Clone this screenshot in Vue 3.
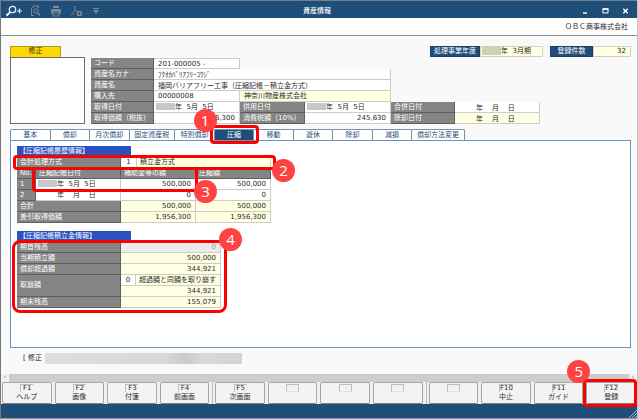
<script setup>
const yen = (n) => n.toLocaleString('en-US')

const tabs = ['基本', '償却', '月次償却', '固定資産税', '特別償却', '圧縮', '移動', '遊休', '除却', '減損', '償却方法変更']
const activeTab = '圧縮'

const history = [
  { no: 1, masked: true, date: '年  5月  5日', subsidy: 500000, reduction: 500000 },
  { no: 2, masked: false, date: '年    月    日', subsidy: 0, reduction: 0 }
]
const totals = [
  { name: '合計', subsidy: 500000, reduction: 500000 },
  { name: '差引取得価額', subsidy: 1956300, reduction: 1956300 }
]

const keyGroups = [
  [
    { key: 'F1', text: 'ヘルプ' },
    { key: 'F2', text: '画像' },
    { key: 'F3', text: '付箋' },
    { key: 'F4', text: '前画面' }
  ],
  [{ key: 'F5', text: '次画面' }, {}, {}, {}],
  [
    {},
    { key: 'F10', text: '中止' },
    { key: 'F11', text: 'ガイド' },
    { key: 'F12', text: '登録', mark: 5 }
  ]
]
</script>

<template>
  <div class="window">
    <header class="titlebar">
      <div class="tools">
        <button class="tool bright">
          <svg width="18" height="12" viewBox="0 0 18 12" fill="none" stroke="currentColor">
            <circle cx="7.500" cy="4.500" r="3.200" stroke-width="1.300" />
            <path d="M5.200 7 L1.400 10.800" stroke-width="2" />
            <path d="M12 6h5M14.500 3.500v5" stroke-width="1.200" />
          </svg>
        </button>
        <button class="tool">
          <svg width="11" height="12" viewBox="0 0 11 12" fill="none" stroke="currentColor">
            <path d="M4 10.500H1.500V3.500L3.500 1H8.500V3" />
            <circle cx="6" cy="6" r="2.200" />
            <path d="M7.500 7.500L10 10.500" stroke-width="1.500" />
          </svg>
        </button>
        <button class="tool">
          <svg width="12" height="12" viewBox="0 0 12 12" fill="currentColor">
            <path d="M3 1h6v2H3zM1 4h10v5H9.500V7h-7v2H1z" />
            <path d="M3 8h6v3H3z" fill="none" stroke="currentColor" />
          </svg>
        </button>
        <button class="tool">
          <svg width="12" height="12" viewBox="0 0 12 12" fill="none" stroke="currentColor">
            <path d="M3.500 1c1 2.500 0 6-3 9.500M4 4.500c.8 1.300 1.500 1.700 2.500 2.500" />
            <circle cx="8.500" cy="8.500" r="2" stroke-width="1.700" />
          </svg>
        </button>
        <button class="tool">
          <svg width="8" height="12" viewBox="0 0 8 12" fill="currentColor">
            <path d="M1 3h6v1H1zM1 5h6L4 9z" />
          </svg>
        </button>
      </div>
      <h1>資産情報</h1>
      <div class="controls">
        <button class="tool">
          <svg width="7" height="8" viewBox="0 0 7 8"><path d="M1 6h4" stroke="#fff" stroke-width="1.400" /></svg>
        </button>
        <button class="tool">
          <svg width="7" height="8" viewBox="0 0 7 8"><path d="M1 2h5v4H1z" fill="none" stroke="#fff" /><path d="M.5 2h6" stroke="#fff" stroke-width="1.500" /></svg>
        </button>
        <button class="tool">
          <svg width="7" height="8" viewBox="0 0 7 8"><path d="M1.300 1.800l4.400 4.400M5.700 1.800L1.300 6.200" stroke="#fff" stroke-width="1.400" /></svg>
        </button>
      </div>
    </header>

    <div class="company">ＯＢＣ商事株式会社</div>

    <main>
      <div class="topline">
        <span class="mode">修正</span>
        <dl class="summary">
          <dt class="navy year">処理事業年度</dt>
          <dd class="year-value"><i class="mask olive"></i>年&nbsp; 3月期</dd>
          <dt class="navy count">登録件数</dt>
          <dd class="count-value">32</dd>
        </dl>
      </div>

      <div class="asset">
        <div class="photo"></div>
        <div class="fields">
          <label class="name" for="code">コード</label>
          <input id="code" class="cell" value="201-000005 -">
          <label class="name first" for="kana">資産名カナ</label>
          <input id="kana" class="cell wide" value="ﾌｸｵｶﾊﾞﾘｱﾌﾘｰｺｳｼﾞ">
          <label class="name first" for="asset">資産名</label>
          <input id="asset" class="cell wide" value="福岡バリアフリー工事（圧縮記帳－積立金方式）">
          <label class="name first" for="vendor">購入先</label>
          <input id="vendor" class="cell" value="00000008">
          <output class="cell pair fixed" for="vendor">神奈川物産株式会社</output>
          <label class="name first" for="acquired">取得日付</label>
          <span class="cell date"><i class="mask"></i><input id="acquired" value="年  5月  5日"></span>
          <label class="name" for="started">供用日付</label>
          <span class="cell date"><i class="mask"></i><input id="started" value="年  5月  5日"></span>
          <label class="name" for="merged">合併日付</label>
          <input id="merged" class="cell empty-date" value="年    月    日">
          <label class="name" for="cost">取得価額（税抜）</label>
          <input id="cost" class="cell num" value="2,456,300">
          <label class="name" for="tax">消費税額（10%）</label>
          <input id="tax" class="cell num" value="245,630">
          <label class="name" for="retired">除却日付</label>
          <input id="retired" class="cell empty-date fixed" readonly value="年    月    日">
        </div>
      </div>

      <nav class="tabs">
        <div v-for="t in tabs" :key="t" class="tab" :class="{ active: t === activeTab, w5: t.length === 5, w6: t.length === 6 }">
          <button>{{ t }}</button>
          <span v-if="t === activeTab" class="frame frame-tab"><b class="pin">1</b></span>
        </div>
      </nav>

      <section class="panel">
        <h2>【圧縮記帳履歴情報】</h2>
        <div class="history">
          <div class="method">
            <label class="name" for="method">会計処理方式</label>
            <input id="method" class="cell center" value="1">
            <output class="cell fixed" for="method">積立金方式</output>
            <span class="frame frame-method"><b class="pin">2</b></span>
          </div>
          <table>
            <colgroup>
              <col class="c-no"><col class="c-date"><col class="c-amount"><col class="c-amount">
            </colgroup>
            <thead>
              <tr>
                <th>No.</th>
                <th id="h-date">圧縮記帳日付</th>
                <th id="h-subsidy">補助金等の額</th>
                <th id="h-reduction">圧縮額</th>
              </tr>
            </thead>
            <tbody>
              <tr v-for="r in history" :key="r.no">
                <th>{{ r.no }}</th>
                <td><div class="date"><i class="mask" :class="{ clear: !r.masked }"></i><input :value="r.date" aria-labelledby="h-date"></div></td>
                <td><input class="num" :value="yen(r.subsidy)" aria-labelledby="h-subsidy"></td>
                <td><input class="num" :value="yen(r.reduction)" aria-labelledby="h-reduction"></td>
              </tr>
              <tr v-for="r in totals" :key="r.name">
                <th colspan="2">{{ r.name }}</th>
                <td class="fixed num">{{ yen(r.subsidy) }}</td>
                <td class="fixed num">{{ yen(r.reduction) }}</td>
              </tr>
            </tbody>
          </table>
          <span class="frame frame-entry"><b class="pin">3</b></span>
        </div>

        <h2>【圧縮記帳積立金情報】</h2>
        <div class="reserve">
          <span class="name">期首残高</span>
          <span class="cell num off">0</span>
          <span class="name">当期積立額</span>
          <span class="cell num fixed">500,000</span>
          <span class="name">償却超過額</span>
          <span class="cell num fixed">344,921</span>
          <label class="name double" for="release">取崩額</label>
          <span class="release">
            <input id="release" class="cell center" value="0">
            <output class="cell fixed" for="release">超過額と同額を取り崩す</output>
          </span>
          <span class="cell num fixed">344,921</span>
          <span class="name">期末残高</span>
          <span class="cell num fixed">155,079</span>
          <span class="frame frame-reserve"><b class="pin">4</b></span>
        </div>
      </section>

      <div class="status">[ 修正 <i></i></div>
    </main>

    <div class="scroll"><span>‹</span><i></i><span>›</span></div>

    <div class="keys">
      <div v-for="(g, i) in keyGroups" :key="i" class="group">
        <div v-for="(k, j) in g" :key="j" class="key">
          <button :disabled="!k.key"><kbd>{{ k.key }}</kbd><span>{{ k.text }}</span></button>
          <span v-if="k.mark" class="frame frame-key"><b class="pin">{{ k.mark }}</b></span>
        </div>
      </div>
    </div>

    <footer>
      <svg width="8" height="8" viewBox="0 0 8 8"><path d="M0 8L8 0M3 8L8 3M6 8l2-2" stroke="#a9bccd" /></svg>
    </footer>
  </div>
</template>

<style>
body {
  margin: 0;
}
</style>

<style scoped>
* {
  box-sizing: border-box;
}

.window {
  display: flex;
  flex-direction: column;
  min-height: 100vh;
  overflow: hidden;
  border-left: 1px solid #77797b;
  border-right: 1px solid #c4c6c8;
  background: #f9f9f9;
  color: #2b2b2b;
  font: 7px/10px "DejaVu Sans", "Noto Sans CJK JP", sans-serif;
}

button,
input,
kbd {
  margin: 0;
  padding: 0;
  border: 0;
  background: none;
  color: inherit;
  font: inherit;
}

h1,
h2,
dl,
dd {
  margin: 0;
  font-size: 7px;
}

.titlebar {
  display: grid;
  grid-template-columns: 1fr auto 1fr;
  align-items: center;
  height: 18px;
  padding: 2px 8px 0 4px;
  border-top: 1px solid #74818d;
  background: #1f4e79;
  color: #fff;
}

.titlebar h1 {
  font-weight: 500;
}

.tools {
  display: flex;
  gap: 7px;
}

.tool {
  display: flex;
  color: #7c8892;
}

.tool.bright {
  color: #e8eef4;
}

.tools .tool:nth-child(n + 3) {
  margin-left: 2px;
}

.controls {
  display: flex;
  justify-content: flex-end;
  gap: 13px;
}

.company {
  height: 18px;
  padding: 4px 9px 0;
  border-bottom: 1px solid #8c8c8c;
  background: #fff;
  text-align: right;
}

main {
  display: flex;
  flex: 1;
  flex-direction: column;
  padding: 10px 6px 10px 9px;
}

.topline {
  display: flex;
  justify-content: space-between;
}

.mode {
  width: 51px;
  border: 1px solid #b09a1c;
  border-bottom: 0;
  background: #ffd800;
  text-align: center;
  line-height: 9px;
}

.summary {
  display: flex;
  line-height: 9px;
}

.navy {
  border: 1px solid #173e63;
  background: #1f4e79;
  color: #fff;
  text-align: center;
}

.year {
  width: 50px;
}

.count {
  width: 43px;
}

.year-value,
.count-value {
  border: 1px solid #d2d2c0;
  background: #ffffe1;
}

.year-value {
  display: flex;
  width: 63px;
  margin-right: 7px;
  padding-left: 1px;
}

.count-value {
  width: 38px;
  padding-right: 4px;
  text-align: right;
}

.mask {
  flex: none;
  width: 19px;
  height: 7px;
  margin: 1px 0 0 2px;
  background: #c8c8c8;
}

.mask.olive {
  height: 8px;
  margin: 0;
  background: #cfcfb8;
}

.mask.clear {
  background: none;
}

.asset {
  display: flex;
  gap: 6px;
  align-items: flex-end;
}

.photo {
  width: 75px;
  height: 67px;
  border: 1px solid #6c6c6c;
  background: #fff;
}

.fields {
  display: grid;
  grid-template-columns: 63px 86px 65px 86px 64px 85px;
  grid-auto-rows: 11px;
}

.name,
th {
  overflow: hidden;
  padding: 0 0 0 3px;
  border: solid;
  border-width: 0 1px 1px 0;
  border-color: #5f5f5f;
  background: #858585;
  color: #fff;
  font-weight: 400;
  line-height: 10px;
  text-align: left;
  white-space: nowrap;
}

.first {
  grid-column: 1;
}

.cell,
td {
  min-width: 0;
  border: solid #ccc;
  border-width: 0 1px 1px 0;
  background: #fff;
  line-height: 10px;
  white-space: pre;
}

.cell {
  display: block;
  width: 100%;
  height: 11px;
  padding: 0 4px;
}

.cell.wide {
  grid-column: 2 / span 3;
}

.cell.pair {
  grid-column: 3 / span 2;
}

.fields > .cell:nth-child(2) {
  border-top: 1px solid #ccc;
}

.cell.date {
  padding: 0;
}

.date {
  display: flex;
}

.date input {
  flex: 1;
  width: 100%;
  min-width: 0;
  height: 10px;
}

.cell.empty-date {
  padding-left: 21px;
}

.cell.center {
  padding: 0;
  text-align: center;
}

.cell.fixed,
.fixed {
  background: #ffffe1;
}

.cell.off {
  background: #ebebeb;
  color: #999;
}

.num {
  text-align: right;
}

.tabs {
  display: flex;
  width: 455px;
  margin-top: 5px;
}

.tab {
  position: relative;
  flex: 40 1 0;
}

.tab + .tab {
  margin-left: -1px;
}

.tab.w5 {
  flex-grow: 46;
}

.tab.w6 {
  flex-grow: 53;
}

.tab button {
  display: block;
  width: 100%;
  height: 11px;
  border: 1px solid #7593b0;
  border-bottom: 0;
  border-radius: 2px 2px 0 0;
  background: #fff;
  color: #1f4e79;
  line-height: 10px;
  text-align: center;
  white-space: nowrap;
}

.tab.active button {
  background: #1f4e79;
  color: #fff;
}

.panel {
  flex: 1;
  padding: 5px 6px;
  border: 1px solid #6b93b8;
  background: #fff;
}

h2 {
  width: 114px;
  height: 11px;
  padding-left: 2px;
  background: #2a52be;
  color: #fff;
  font-weight: 400;
  line-height: 11px;
}

.history {
  position: relative;
  width: 254px;
  margin-bottom: 8px;
}

.method {
  position: relative;
  display: grid;
  grid-template-columns: 104px 16px 1fr;
}

.method .cell + .cell {
  padding-left: 3px;
}

table {
  width: 100%;
  table-layout: fixed;
  border-spacing: 0;
}

tr {
  height: 11px;
}

td {
  padding: 0;
}

td.num,
td .num {
  padding-right: 4px;
}

td input {
  display: block;
  width: 100%;
  height: 10px;
}

td .num {
  text-align: right;
}

.c-no {
  width: 19px;
}

.c-date {
  width: 85px;
}

.c-amount {
  width: 75px;
}

.reserve {
  position: relative;
  display: grid;
  grid-template-columns: 104px 100px;
  grid-auto-rows: 11px;
  width: 204px;
}

.double {
  grid-row: span 2;
  line-height: 21px;
}

.release {
  display: grid;
  grid-template-columns: 15px 1fr;
}

.release .cell + .cell {
  padding: 0 0 0 3px;
}

.status {
  display: flex;
  gap: 3px;
  margin-top: 5px;
  padding-left: 13px;
  line-height: 11px;
}

.status i {
  width: 197px;
  height: 11px;
  background: linear-gradient(90deg, #dedede, #d8d8d8 60%, #cacaca 72%, #d8d8d8 80%, #d4d4d4);
}

.scroll {
  display: flex;
  height: 8px;
  background: #f0f0f0;
  color: #888;
  line-height: 7px;
}

.scroll span {
  width: 8px;
  text-align: center;
}

.scroll i {
  flex: 1;
  background: #cdcdcd;
}

.keys {
  display: flex;
  background: #f0f0f0;
}

.group {
  display: flex;
  flex: 1;
  gap: 3px;
  padding: 0 3px 0 1px;
}

.group + .group {
  padding-left: 2px;
  border-left: 1px solid #bbb;
}

.group:last-child {
  padding-right: 1px;
}

.key {
  position: relative;
  flex: 1;
}

.key button {
  display: flex;
  flex-direction: column;
  align-items: center;
  width: 100%;
  height: 22px;
  padding-top: 1px;
  border: 1px solid #a6a6a6;
  border-bottom-color: #808080;
  border-radius: 2px;
  background: #f3f3f3;
  line-height: 10px;
}

kbd {
  min-width: 13px;
  height: 8px;
  border: solid #bcbcbc;
  border-width: 1px 0 0 1px;
  line-height: 7px;
}

button:disabled kbd {
  border-right-width: 1px;
  border-bottom: 1px solid #e2e2e2;
}

footer {
  display: flex;
  align-items: flex-end;
  justify-content: flex-end;
  height: 15px;
  border-bottom: 1px solid #8599ab;
  background: #1f4e79;
}

.frame {
  position: absolute;
  z-index: 2;
  border: 3px solid #f00;
  border-radius: 4px;
  pointer-events: none;
}

.pin {
  position: absolute;
  z-index: 3;
  width: 23px;
  height: 23px;
  border-radius: 50%;
  background: #ff4343;
  color: #fff;
  font: 400 15px/23px "Open Sans", sans-serif;
  text-align: center;
}

.frame-tab {
  inset: -4px -5px -4px -4px;
}

.frame-tab .pin {
  top: -19px;
  left: -19px;
}

.frame-method {
  inset: -2px -5px -2px -4px;
}

.frame-method .pin {
  top: 1px;
  right: -22px;
}

.frame-entry {
  top: 10px;
  left: 15px;
  width: 166px;
  height: 25px;
}

.frame-entry .pin {
  right: -22px;
  bottom: -14px;
}

.frame-reserve {
  inset: -2px -6px -5px -5px;
  border-radius: 8px;
}

.frame-reserve .pin {
  top: -15px;
  right: -18px;
}

.frame-key {
  inset: -3px -1px -3px -3px;
}

.frame-key .pin {
  top: -22px;
  left: -19px;
}
</style>
